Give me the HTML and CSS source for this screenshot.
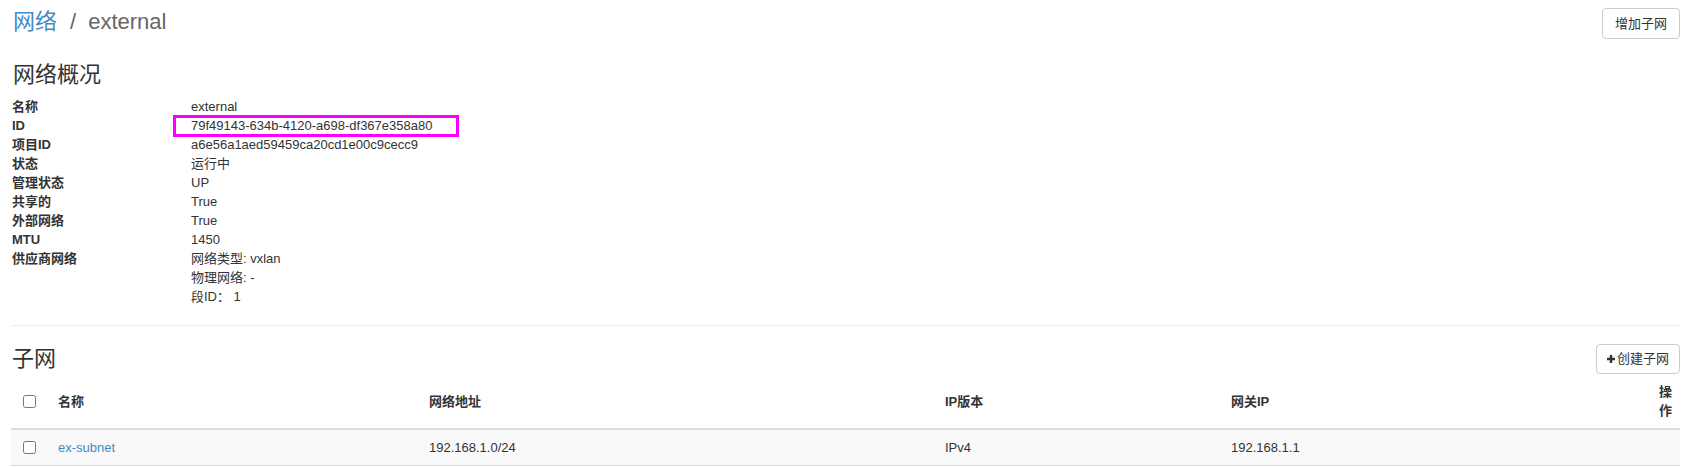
FILE: index.html
```html
<!DOCTYPE html>
<html lang="zh-CN">
<head>
<meta charset="utf-8">
<title>网络详情</title>
<link rel="stylesheet" href="styles.css">
</head>
<body>
<div class="page">
  <div class="page-header">
    <h1 class="title"><a class="crumb-link" href="#">网络</a><span class="sep">/</span><span class="crumb-cur">external</span></h1>
    <button class="btn btn-top" type="button">增加子网</button>
  </div>

  <h3 class="section-title">网络概况</h3>
  <dl class="details">
    <dt>名称</dt><dd>external</dd>
    <dt>ID</dt><dd class="highlight">79f49143-634b-4120-a698-df367e358a80</dd>
    <dt>项目ID</dt><dd>a6e56a1aed59459ca20cd1e00c9cecc9</dd>
    <dt>状态</dt><dd>运行中</dd>
    <dt>管理状态</dt><dd>UP</dd>
    <dt>共享的</dt><dd>True</dd>
    <dt>外部网络</dt><dd>True</dd>
    <dt>MTU</dt><dd>1450</dd>
    <dt>供应商网络</dt><dd>网络类型: vxlan<br>物理网络: -<br>段ID： 1</dd>
  </dl>

  <hr class="divider">

  <div class="subnet-header">
    <h3 class="section-title sub">子网</h3>
    <button class="btn btn-create" type="button"><svg class="plus" width="8" height="8" viewBox="0 0 8 8"><path d="M2.8 0h2.4v2.8H8v2.4H5.2V8H2.8V5.2H0V2.8h2.8z" fill="#333"/></svg>创建子网</button>
  </div>

  <table class="subnets">
    <colgroup>
      <col class="c-check">
      <col class="c-name">
      <col class="c-cidr">
      <col class="c-ver">
      <col class="c-gw">
      <col class="c-act">
    </colgroup>
    <thead>
      <tr>
        <th><input type="checkbox" class="cb"></th>
        <th>名称</th>
        <th>网络地址</th>
        <th>IP版本</th>
        <th>网关IP</th>
        <th class="act">操作</th>
      </tr>
    </thead>
    <tbody>
      <tr>
        <td><input type="checkbox" class="cb"></td>
        <td><a class="link" href="#">ex-subnet</a></td>
        <td>192.168.1.0/24</td>
        <td>IPv4</td>
        <td>192.168.1.1</td>
        <td></td>
      </tr>
    </tbody>
  </table>
</div>
</body>
</html>
```
FILE: styles.css
```css
*, *::before, *::after { box-sizing: border-box; }

html, body {
  margin: 0;
  padding: 0;
  background: #fff;
}

body {
  font-family: "Liberation Sans", "Noto Sans CJK SC", sans-serif;
  font-size: 13px;
  line-height: 19px;
  color: #333;
}

.page {
  padding: 0 16px 0 11px;
}

.page-header {
  display: flex;
  justify-content: space-between;
  align-items: flex-start;
  height: 37px;
}

.title {
  margin: 7px 0 0 2px;
  font-size: 22px;
  line-height: 30px;
  font-weight: normal;
  color: #666;
}

.crumb-link {
  color: #428bca;
  text-decoration: none;
}

.sep {
  margin: 0 12px 0 13px;
  color: #666;
}

.crumb-cur {
  color: #666;
}

.btn {
  display: inline-flex;
  align-items: center;
  font-family: "Liberation Sans", "Noto Sans CJK SC", sans-serif;
  font-size: 13px;
  color: #333;
  background: #fff;
  border: 1px solid #ccc;
  border-radius: 4px;
  cursor: pointer;
}

.btn-top {
  margin-top: 8px;
  height: 31px;
  padding: 0 12px;
  line-height: 17px;
}

.btn-create {
  height: 30px;
  padding: 0 10px;
  line-height: 16px;
}

.plus {
  margin-right: 2px;
  flex: none;
}

.section-title {
  margin: 24px 0 8px 2px;
  font-size: 22px;
  line-height: 28px;
  font-weight: normal;
  color: #333;
}

.details {
  margin: 0 0 19px 0;
  padding-left: 1px;
  display: grid;
  grid-template-columns: 179px 1fr;
}

.details dt {
  font-weight: bold;
  margin: 0;
}

.details dd {
  margin: 0;
}

.details dd.highlight {
  position: relative;
}

.details dd.highlight::after {
  content: "";
  position: absolute;
  left: -18px;
  top: -1px;
  width: 286px;
  height: 22px;
  border: 3px solid #f0f;
  pointer-events: none;
}

.divider {
  margin: 0;
  border: 0;
  border-top: 1px solid #eee;
  height: 1px;
}

.subnet-header {
  display: flex;
  justify-content: space-between;
  align-items: center;
  margin-top: 18px;
  height: 30px;
}

.section-title.sub {
  margin: 0 0 0 1px;
  line-height: 30px;
}

.subnets {
  width: 100%;
  table-layout: fixed;
  border-collapse: collapse;
  border-spacing: 0;
}

.c-check { width: 39px; }
.c-name { width: 371px; }
.c-cidr { width: 516px; }
.c-ver { width: 286px; }
.c-gw { width: 428px; }
.c-act { width: 29px; }

.subnets th,
.subnets td {
  padding: 8px;
  text-align: left;
  vertical-align: middle;
  line-height: 19px;
}

.subnets th {
  font-weight: bold;
  border-bottom: 2px solid #ddd;
}

.subnets th.act {
  text-align: right;
  word-break: break-all;
}

.subnets tbody tr {
  background: #f9f9f9;
}

.subnets td {
  border-bottom: 1px solid #ddd;
}

.cb {
  width: 13px;
  height: 13px;
  margin: 0 0 0 4px;
  display: block;
}

.link {
  color: #428bca;
  text-decoration: none;
}
```
